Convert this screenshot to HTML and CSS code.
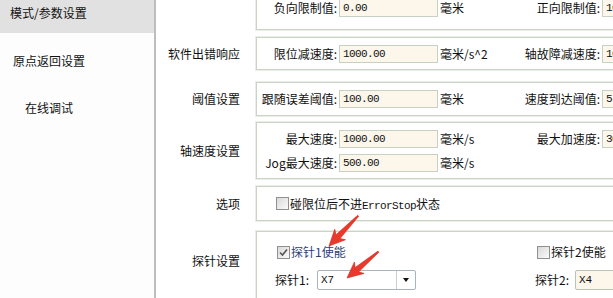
FILE: index.html
```html
<!DOCTYPE html>
<html lang="zh">
<head>
<meta charset="utf-8">
<link rel="stylesheet" href="styles.css">
</head>
<body>
<div class="app">
  <nav class="side">
    <div class="item sel">模式/参数设置</div>
    <div class="item i2">原点返回设置</div>
    <div class="item i3">在线调试</div>
  </nav>
  <main class="pane">
    <section class="sec s1">
      <div class="cap"></div>
      <div class="box">
        <div class="row"><span class="lab">负向限制值:</span><span class="inp">0.00</span><span class="unit">毫米</span><span class="lab2">正向限制值:</span><span class="inp">100.00</span></div>
      </div>
    </section>
    <section class="sec s2">
      <div class="cap">软件出错响应</div>
      <div class="box">
        <div class="row"><span class="lab">限位减速度:</span><span class="inp">1000.00</span><span class="unit">毫米/s^2</span><span class="lab2">轴故障减速度:</span><span class="inp">1000.00</span></div>
      </div>
    </section>
    <section class="sec s3">
      <div class="cap">阈值设置</div>
      <div class="box">
        <div class="row"><span class="lab">跟随误差阈值:</span><span class="inp">100.00</span><span class="unit">毫米</span><span class="lab2">速度到达阈值:</span><span class="inp">5.00</span></div>
      </div>
    </section>
    <section class="sec s4">
      <div class="cap">轴速度设置</div>
      <div class="box">
        <div class="row"><span class="lab">最大速度:</span><span class="inp">1000.00</span><span class="unit">毫米/s</span><span class="lab2">最大加速度:</span><span class="inp">3000.00</span></div>
        <div class="row"><span class="lab">Jog最大速度:</span><span class="inp">500.00</span><span class="unit">毫米/s</span></div>
      </div>
    </section>
    <section class="sec s5">
      <div class="cap">选项</div>
      <div class="box">
        <div class="row opt"><span class="cb"></span><span>碰限位后不进<span class="mono">ErrorStop</span>状态</span></div>
      </div>
    </section>
    <section class="sec s6">
      <div class="cap">探针设置</div>
      <div class="box">
        <div class="row prow1">
          <span class="pgrp"><span class="cb on"><svg width="11" height="11" viewBox="0 0 11 11"><path d="M2 5.5 L4.5 8 L9 2.5" fill="none" stroke="#555" stroke-width="1.6"/></svg></span><span class="en">探针1使能</span></span>
          <span class="pgrp2"><span class="cb"></span><span>探针2使能</span></span>
        </div>
        <div class="row prow2">
          <span class="plab">探针1:</span>
          <span class="combo"><span class="cval">X7</span><span class="cbtn"><i class="tri"></i></span></span>
          <span class="plab2">探针2:</span>
          <span class="pinp">X4</span>
        </div>
      </div>
    </section>
  </main>
  <svg class="arrows" width="613" height="298" viewBox="0 0 613 298">
    <g transform="translate(329 246) rotate(134)">
      <polygon points="-42,-0.7 -13,-2.8 -16,-7.5 0,0 -16,7.5 -13,2.8 -42,0.7" fill="#e8392c" stroke="#d42a1f" stroke-width="0.6" stroke-linejoin="round"/>
    </g>
    <g transform="translate(347 278) rotate(140)">
      <polygon points="-41,-0.7 -13,-2.8 -16,-7.5 0,0 -16,7.5 -13,2.8 -41,0.7" fill="#e8392c" stroke="#d42a1f" stroke-width="0.6" stroke-linejoin="round"/>
    </g>
  </svg>
</div>
</body>
</html>
```

FILE: styles.css
```css
html, body {
  margin: 0;
  padding: 0;
}
body {
  font: 12px/18px "Noto Sans CJK SC", sans-serif;
  color: #111;
  background: #fff;
  overflow: hidden;
}
.app {
  position: relative;
  display: flex;
  width: 613px;
  height: 298px;
  overflow: hidden;
  background: #fff;
}
.side {
  width: 154px;
  flex: none;
  background: #fdfdfd;
  border-right: 2px solid #bebebe;
}
.item {
  height: 18px;
  white-space: nowrap;
  color: #111;
}
.sel {
  height: 33px;
  box-sizing: border-box;
  padding: 4px 0 0 10px;
  background: #e1e1e1;
}
.i2 {
  margin-top: 19px;
  padding-left: 13px;
}
.i3 {
  margin-top: 29px;
  padding-left: 25px;
}
.pane {
  flex: 1;
  min-width: 0;
  display: flex;
  flex-direction: column;
}
.sec {
  display: flex;
  flex: none;
}
.cap {
  width: 84px;
  flex: none;
  display: flex;
  align-items: center;
  justify-content: flex-end;
  white-space: nowrap;
}
.box {
  flex: none;
  width: 380px;
  margin-left: 16px;
  box-sizing: border-box;
  border: 1px solid #cad5c7;
  box-shadow: 0 0 0 1px #e9eee7;
  display: flex;
  flex-direction: column;
  justify-content: center;
  gap: 6px;
}
.s1 .box {
  height: 30px;
  border-top: 0;
  justify-content: flex-start;
}
.s1 .row {
  margin-top: -1px;
}
.s2 { margin-top: 7px; }
.s2 .box { height: 33px; }
.s3 { margin-top: 12px; }
.s3 .box { height: 34px; }
.s4 { margin-top: 6px; }
.s4 .box { height: 57px; }
.s5 { margin-top: 7px; }
.s5 .box { height: 35px; }
.s6 { margin-top: 10px; }
.s6 .box {
  height: 80px;
  justify-content: flex-start;
  padding-top: 12px;
  gap: 10px;
}
.s6 .cap {
  align-items: flex-start;
  padding-top: 21px;
  box-sizing: border-box;
  height: 40px;
}
.row {
  display: flex;
  align-items: center;
  height: 18px;
  white-space: nowrap;
}
.lab {
  width: 82px;
  flex: none;
  box-sizing: border-box;
  padding-right: 2px;
  text-align: right;
}
.inp {
  width: 99px;
  height: 18px;
  flex: none;
  box-sizing: border-box;
  border: 1px solid #c6d2c1;
  background: #fcf6eb;
  padding-left: 3px;
  font: 11px/16px "Liberation Mono", monospace;
  letter-spacing: -0.6px;
  color: #111;
}
.unit {
  width: 60px;
  flex: none;
  box-sizing: border-box;
  padding-left: 2px;
}
.lab2 {
  width: 104px;
  flex: none;
  box-sizing: border-box;
  padding-right: 2px;
  text-align: right;
}
.mono {
  font: 11px "Liberation Mono", monospace;
  letter-spacing: -0.6px;
}
.opt {
  padding-left: 19px;
}
.cb {
  width: 11px;
  height: 11px;
  flex: none;
  border: 1px solid #8f9090;
  background: linear-gradient(135deg, #d9d9d9, #fafafa);
  margin-right: 1px;
  display: inline-flex;
}
.prow1 {
  height: 16px;
  padding-left: 20px;
}
.pgrp {
  width: 260px;
  flex: none;
  display: flex;
  align-items: center;
}
.pgrp2 {
  display: flex;
  align-items: center;
}
.en {
  color: #2c3e78;
}
.prow2 {
  height: 20px;
  padding-left: 18px;
}
.plab {
  width: 42px;
  flex: none;
}
.combo {
  width: 99px;
  height: 20px;
  flex: none;
  box-sizing: border-box;
  border: 1px solid #a9b3bd;
  border-radius: 2px;
  background: #fff;
  display: flex;
  margin-right: 119px;
}
.cval {
  flex: 1;
  padding-left: 3px;
  font: 11px/18px "Liberation Mono", monospace;
}
.cbtn {
  width: 18px;
  border-left: 1px solid #c9ced3;
  display: flex;
  align-items: center;
  justify-content: center;
}
.tri {
  width: 0;
  height: 0;
  border-left: 3.5px solid transparent;
  border-right: 3.5px solid transparent;
  border-top: 4px solid #111;
}
.plab2 {
  width: 40px;
  flex: none;
}
.pinp {
  width: 99px;
  height: 20px;
  flex: none;
  box-sizing: border-box;
  border: 1px solid #b9c4b5;
  border-radius: 2px;
  background: #fcf6eb;
  padding-left: 3px;
  font: 11px/18px "Liberation Mono", monospace;
}
.arrows {
  position: absolute;
  left: 0;
  top: 0;
  pointer-events: none;
}
```
